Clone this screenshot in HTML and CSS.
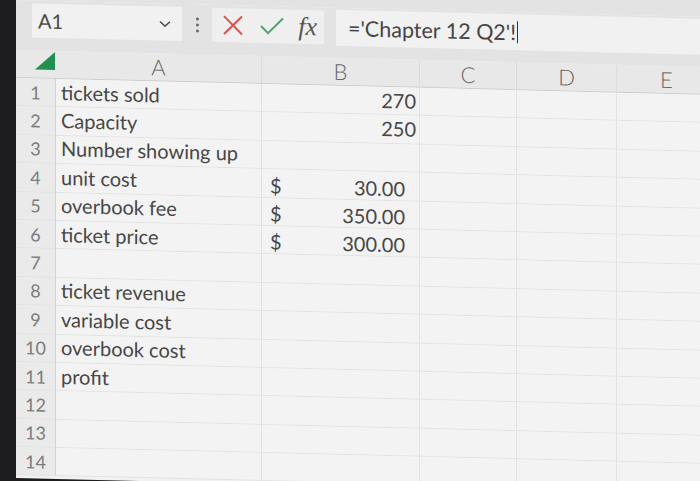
FILE: index.html
```html
<!DOCTYPE html>
<html lang="en">
<head>
    <meta charset="UTF-8">
    <meta name="viewport" content="width=device-width, initial-scale=1.0">
    <title>Chapter 12 Q2</title>
    <link rel="stylesheet" href="styles.css">
</head>
<body>
    <div class="bezel"></div>
    <div class="screen">
        <div class="toolbar">
            <div class="name-box">
                <span>A1</span>
                <svg class="chevron" width="14" height="10" viewBox="0 0 14 10"><path d="M2 3 L7 7.5 L12 3" fill="none" stroke="#555" stroke-width="1.6"/></svg>
            </div>
            <div class="dots"><i></i><i></i><i></i></div>
            <div class="buttons">
                <svg width="24" height="24" viewBox="0 0 24 24"><path d="M3 3 L21 21 M21 3 L3 21" stroke="#e0514e" stroke-width="2" fill="none"/></svg>
                <svg width="26" height="22" viewBox="0 0 26 22"><path d="M2 11 L9 18 L24 3" stroke="#4ea56c" stroke-width="2" fill="none"/></svg>
                <span class="fx">fx</span>
            </div>
            <div class="formula">='Chapter 12 Q2'!<span class="caret"></span></div>
        </div>

        <div class="sheet">
            <div class="corner"><span class="tri"></span></div>
            <div class="col-head">A</div>
            <div class="col-head">B</div>
            <div class="col-head">C</div>
            <div class="col-head">D</div>
            <div class="col-head">E</div>

            <div class="row-num">1</div><div class="cell">tickets sold</div><div class="cell num">270</div><div class="cell"></div><div class="cell"></div><div class="cell"></div>
            <div class="row-num">2</div><div class="cell">Capacity</div><div class="cell num">250</div><div class="cell"></div><div class="cell"></div><div class="cell"></div>
            <div class="row-num">3</div><div class="cell">Number showing up</div><div class="cell"></div><div class="cell"></div><div class="cell"></div><div class="cell"></div>
            <div class="row-num">4</div><div class="cell">unit cost</div><div class="cell money"><span>$</span><span>30.00</span></div><div class="cell"></div><div class="cell"></div><div class="cell"></div>
            <div class="row-num">5</div><div class="cell">overbook fee</div><div class="cell money"><span>$</span><span>350.00</span></div><div class="cell"></div><div class="cell"></div><div class="cell"></div>
            <div class="row-num">6</div><div class="cell">ticket price</div><div class="cell money"><span>$</span><span>300.00</span></div><div class="cell"></div><div class="cell"></div><div class="cell"></div>
            <div class="row-num">7</div><div class="cell"></div><div class="cell"></div><div class="cell"></div><div class="cell"></div><div class="cell"></div>
            <div class="row-num">8</div><div class="cell">ticket revenue</div><div class="cell"></div><div class="cell"></div><div class="cell"></div><div class="cell"></div>
            <div class="row-num">9</div><div class="cell">variable cost</div><div class="cell"></div><div class="cell"></div><div class="cell"></div><div class="cell"></div>
            <div class="row-num">10</div><div class="cell">overbook cost</div><div class="cell"></div><div class="cell"></div><div class="cell"></div><div class="cell"></div>
            <div class="row-num">11</div><div class="cell">profit</div><div class="cell"></div><div class="cell"></div><div class="cell"></div><div class="cell"></div>
            <div class="row-num">12</div><div class="cell"></div><div class="cell"></div><div class="cell"></div><div class="cell"></div><div class="cell"></div>
            <div class="row-num">13</div><div class="cell"></div><div class="cell"></div><div class="cell"></div><div class="cell"></div><div class="cell"></div>
            <div class="row-num">14</div><div class="cell"></div><div class="cell"></div><div class="cell"></div><div class="cell"></div><div class="cell"></div>
        </div>
    </div>
</body>
</html>
```

FILE: styles.css
```css
html, body {
    height: 100%;
}
body {
    margin: 0;
    display: flex;
    align-items: flex-start;
    background-color: #1d1d20;
    font-family: Lato, "Open Sans", sans-serif;
    color: #474747;
    overflow: hidden;
}
.bezel {
    width: 16px;
    flex-shrink: 0;
}
/* the photo is taken at a slight angle */
.screen {
    flex: 1;
    height: 478px;
    background-color: #f1f1f1;
    overflow: hidden;
    transform: skewY(1.4deg);
    transform-origin: 0 0;
    box-shadow: 0 -26px 0 #e3e3e3;
}

/* formula bar */
.toolbar {
    height: 50px;
    display: flex;
    align-items: center;
    background-color: #e3e3e3;
    padding: 0 0 10px 16px;
    box-sizing: border-box;
}
.name-box {
    width: 150px;
    height: 34px;
    display: flex;
    align-items: center;
    justify-content: space-between;
    padding: 0 10px 0 6px;
    box-sizing: border-box;
    background-color: #f1f1f1;
    font-size: 20px;
    color: #4a4a4a;
}
.dots {
    width: 30px;
    display: flex;
    flex-direction: column;
    align-items: center;
    gap: 3px;
}
.dots i {
    width: 3px;
    height: 3px;
    border-radius: 50%;
    background-color: #666;
}
.buttons {
    width: 110px;
    height: 34px;
    display: flex;
    align-items: center;
    justify-content: space-around;
    background-color: #efefef;
    padding-left: 2px;
}
.fx {
    font-family: "Liberation Serif", serif;
    font-style: italic;
    font-size: 26px;
    color: #555;
}
.formula {
    flex: 1;
    height: 36px;
    margin-left: 12px;
    padding-left: 12px;
    display: flex;
    align-items: center;
    background-color: #f1f1f1;
    font-size: 21.5px;
    color: #454545;
}
.caret {
    width: 1px;
    height: 22px;
    margin-left: 1px;
    background-color: #333;
}

/* grid */
.sheet {
    display: grid;
    grid-template-columns: 40px 206px 158px 97px 100px 100px;
    grid-template-rows: 28px repeat(14, 28.4px);
}
.corner, .col-head {
    background-color: #e8e8e8;
    border-bottom: 1px solid #cdcdcd;
}
.corner {
    display: flex;
    align-items: flex-end;
    justify-content: flex-end;
    padding: 0 1px 8px 0;
}
.tri {
    width: 0;
    height: 0;
    border-left: 20px solid transparent;
    border-bottom: 18px solid #20904f;
}
.col-head {
    display: flex;
    align-items: center;
    justify-content: center;
    font-size: 22px;
    font-weight: 300;
    color: #666;
    border-right: 1px solid #dcdcdc;
}
.row-num {
    display: flex;
    align-items: center;
    justify-content: center;
    font-size: 18px;
    color: #7c7c7c;
    background-color: #eaeaea;
    border-right: 1px solid #d2d2d2;
    border-bottom: 1px solid #e2e2e2;
}
.cell {
    display: flex;
    align-items: center;
    padding: 0 4px 2px 5px;
    font-size: 20px;
    white-space: nowrap;
    border-right: 1px solid #e2e2e2;
    border-bottom: 1px solid #e2e2e2;
    background-color: #f3f3f3;
}
.num {
    justify-content: flex-end;
    padding-right: 3px;
}
.money {
    justify-content: space-between;
    align-items: flex-end;
    padding: 0 14px 0 8px;
}
```
